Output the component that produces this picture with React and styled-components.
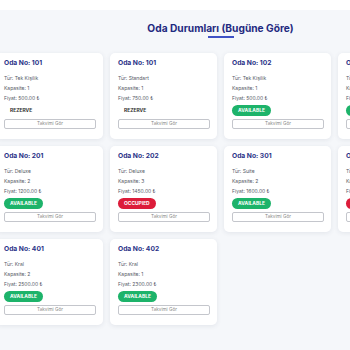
import styled, { createGlobalStyle } from 'styled-components';

const GlobalStyle = createGlobalStyle`
    html, body {
        margin: 0;
        padding: 0;
        background: #ffffff;
        overflow: hidden;
    }
    body {
        font-family: Inter, "Open Sans", sans-serif;
    }
`

const Page = styled.div`
    margin-top: 10px;
    background: #f5f7fa;
    min-height: 340px;
    padding-top: 12px;
`

const Container = styled.div`
    width: 449px;
    margin-left: -4px;
`

const Title = styled.h2`
    margin: 0;
    text-align: center;
    font-size: 10.2px;
    font-weight: 700;
    color: #1f2a80;
    line-height: 12px;
`

const Underline = styled.div`
    width: 26px;
    height: 1.5px;
    background: #3f51c5;
    margin: 2px auto 0;
`

const Grid = styled.div`
    display: grid;
    grid-template-columns: repeat(4, 107px);
    column-gap: 7px;
    row-gap: 7px;
    margin-top: 15px;
    align-items: start;
`

const Card = styled.div`
    background: #fff;
    border-radius: 5px;
    box-shadow: 0 1px 5px rgba(30, 40, 80, 0.09);
    padding: 5px 7px 8px 8px;
    height: 86px;
    box-sizing: border-box;
    display: flex;
    flex-direction: column;
`

const RoomNo = styled.h3`
    margin: 0 0 7px;
    font-size: 6.7px;
    font-weight: 700;
    color: #2a3388;
    line-height: 10px;
`

const Detail = styled.p`
    margin: 0 0 3.6px;
    font-size: 5px;
    color: #555a66;
    line-height: 6.5px;
`

const Badge = styled.span`
    align-self: flex-start;
    display: inline-flex;
    align-items: center;
    height: 11px;
    padding: 0 6px;
    border-radius: 6px;
    font-size: 4.9px;
    font-weight: 700;
    color: ${p => p.status === 'REZERVE' ? '#333' : '#fff'};
    background: ${p => p.status === 'AVAILABLE' ? '#1db36a' : p.status === 'OCCUPIED' ? '#dc1c3a' : 'transparent'};
`

const CalendarButton = styled.button`
    margin-top: 3px;
    height: 10px;
    width: 100%;
    border: 1px solid #c4c6cc;
    border-radius: 2px;
    background: #fff;
    font-family: inherit;
    font-size: 4.6px;
    color: #888;
    padding: 0;
    cursor: pointer;
`

const rooms = [
    { no: 101, type: 'Tek Kişilik', cap: 1, price: '500.00', status: 'REZERVE' },
    { no: 101, type: 'Standart', cap: 1, price: '750.00', status: 'REZERVE' },
    { no: 102, type: 'Tek Kişilik', cap: 1, price: '500.00', status: 'AVAILABLE' },
    { no: 103, type: 'Tek Kişilik', cap: 1, price: '500.00', status: 'AVAILABLE' },
    { no: 201, type: 'Deluxe', cap: 2, price: '1200.00', status: 'AVAILABLE' },
    { no: 202, type: 'Deluxe', cap: 3, price: '1450.00', status: 'OCCUPIED' },
    { no: 301, type: 'Suite', cap: 2, price: '1600.00', status: 'AVAILABLE' },
    { no: 302, type: 'Suite', cap: 2, price: '1600.00', status: 'OCCUPIED' },
    { no: 401, type: 'Kral', cap: 2, price: '2500.00', status: 'AVAILABLE' },
    { no: 402, type: 'Kral', cap: 1, price: '2300.00', status: 'AVAILABLE' },
]

const App = () => {
    return (
        <>
            <GlobalStyle />
            <Page>
                <Container>
                    <Title>Oda Durumları (Bugüne Göre)</Title>
                    <Underline />
                    <Grid>
                        {rooms.map((room, i) => (
                            <Card key={i}>
                                <RoomNo>Oda No: {room.no}</RoomNo>
                                <Detail>Tür: {room.type}</Detail>
                                <Detail>Kapasite: {room.cap}</Detail>
                                <Detail>Fiyat: {room.price} ₺</Detail>
                                <Badge status={room.status}>{room.status}</Badge>
                                <CalendarButton>Takvimi Gör</CalendarButton>
                            </Card>
                        ))}
                    </Grid>
                </Container>
            </Page>
        </>
    )
}

export default App
